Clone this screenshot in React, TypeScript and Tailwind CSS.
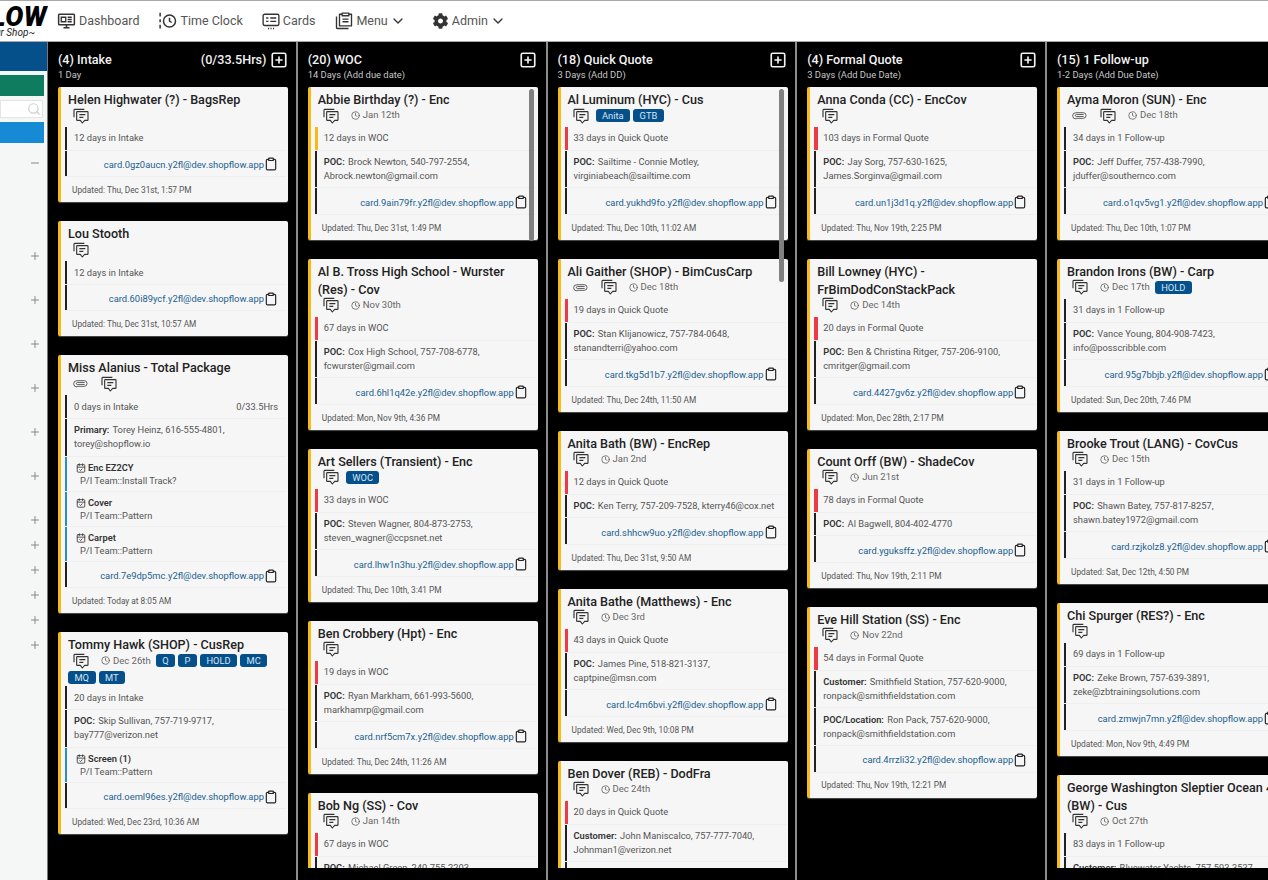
import React from 'react';
import { CalendarCheck, ChevronDown, Clipboard, Clock, Minus, Plus, Search, SquarePlus } from 'lucide-react';
import { FaCog } from 'react-icons/fa';

type Row =
  | { type: 'info'; label: string; text: string }
  | { type: 'task'; name: string; team: string };

type CardData = {
  title: string;
  clip?: boolean;
  date?: string;
  badges?: string[];
  days: string;
  hours?: string;
  bar?: 'red' | 'yellow';
  rows?: Row[];
  mail: string;
  updated: string;
};

type ColumnData = {
  title: string;
  hours?: string;
  sub: string;
  thumb?: string;
  cards: CardData[];
};

const poc = (text: string): Row => ({ type: 'info', label: 'POC:', text });
const customer = (text: string): Row => ({ type: 'info', label: 'Customer:', text });

const columns: ColumnData[] = [
  {
    title: '(4) Intake',
    hours: '(0/33.5Hrs)',
    sub: '1 Day',
    cards: [
      { title: 'Helen Highwater (?) - BagsRep', days: '12 days in Intake', mail: 'card.0gz0aucn', updated: 'Thu, Dec 31st, 1:57 PM' },
      { title: 'Lou Stooth', days: '12 days in Intake', mail: 'card.60i89ycf', updated: 'Thu, Dec 31st, 10:57 AM' },
      {
        title: 'Miss Alanius - Total Package',
        clip: true,
        days: '0 days in Intake',
        hours: '0/33.5Hrs',
        rows: [
          { type: 'info', label: 'Primary:', text: 'Torey Heinz, 616-555-4801, torey@shopflow.io' },
          { type: 'task', name: 'Enc EZ2CY', team: 'P/I Team::Install Track?' },
          { type: 'task', name: 'Cover', team: 'P/I Team::Pattern' },
          { type: 'task', name: 'Carpet', team: 'P/I Team::Pattern' },
        ],
        mail: 'card.7e9dp5mc',
        updated: 'Today at 8:05 AM',
      },
      {
        title: 'Tommy Hawk (SHOP) - CusRep',
        date: 'Dec 26th',
        badges: ['Q', 'P', 'HOLD', 'MC', 'MQ', 'MT'],
        days: '20 days in Intake',
        rows: [poc('Skip Sullivan, 757-719-9717, bay777@verizon.net'), { type: 'task', name: 'Screen (1)', team: 'P/I Team::Pattern' }],
        mail: 'card.oeml96es',
        updated: 'Wed, Dec 23rd, 10:36 AM',
      },
    ],
  },
  {
    title: '(20) WOC',
    sub: '14 Days (Add due date)',
    thumb: 'h-[152px]',
    cards: [
      { title: 'Abbie Birthday (?) - Enc', date: 'Jan 12th', bar: 'yellow', days: '12 days in WOC', rows: [poc('Brock Newton, 540-797-2554, Abrock.newton@gmail.com')], mail: 'card.9ain79fr', updated: 'Thu, Dec 31st, 1:49 PM' },
      { title: 'Al B. Tross High School - Wurster (Res) - Cov', date: 'Nov 30th', bar: 'red', days: '67 days in WOC', rows: [poc('Cox High School, 757-708-6778, fcwurster@gmail.com')], mail: 'card.6hl1q42e', updated: 'Mon, Nov 9th, 4:36 PM' },
      { title: 'Art Sellers (Transient) - Enc', badges: ['WOC'], bar: 'red', days: '33 days in WOC', rows: [poc('Steven Wagner, 804-873-2753, steven_wagner@ccpsnet.net')], mail: 'card.lhw1n3hu', updated: 'Thu, Dec 10th, 3:41 PM' },
      { title: 'Ben Crobbery (Hpt) - Enc', bar: 'red', days: '19 days in WOC', rows: [poc('Ryan Markham, 661-993-5600, markhamrp@gmail.com')], mail: 'card.nrf5cm7x', updated: 'Thu, Dec 24th, 11:26 AM' },
      { title: 'Bob Ng (SS) - Cov', date: 'Jan 14th', bar: 'red', days: '67 days in WOC', rows: [poc('Michael Green, 240-755-2203, mgreen@gmail.com')], mail: 'card.b0bng4ss', updated: 'Thu, Dec 24th, 9:14 AM' },
    ],
  },
  {
    title: '(18) Quick Quote',
    sub: '3 Days (Add DD)',
    thumb: 'h-[193px]',
    cards: [
      { title: 'Al Luminum (HYC) - Cus', badges: ['Anita', 'GTB'], bar: 'red', days: '33 days in Quick Quote', rows: [poc('Sailtime - Connie Motley, virginiabeach@sailtime.com')], mail: 'card.yukhd9fo', updated: 'Thu, Dec 10th, 11:02 AM' },
      { title: 'Ali Gaither (SHOP) - BimCusCarp', clip: true, date: 'Dec 18th', bar: 'red', days: '19 days in Quick Quote', rows: [poc('Stan Klijanowicz, 757-784-0648, stanandterri@yahoo.com')], mail: 'card.tkg5d1b7', updated: 'Thu, Dec 24th, 11:50 AM' },
      { title: 'Anita Bath (BW) - EncRep', date: 'Jan 2nd', bar: 'red', days: '12 days in Quick Quote', rows: [poc('Ken Terry, 757-209-7528, kterry46@cox.net')], mail: 'card.shhcw9uo', updated: 'Thu, Dec 31st, 9:50 AM' },
      { title: 'Anita Bathe (Matthews) - Enc', date: 'Dec 3rd', bar: 'red', days: '43 days in Quick Quote', rows: [poc('James Pine, 518-821-3137, captpine@msn.com')], mail: 'card.lc4m6bvi', updated: 'Wed, Dec 9th, 10:08 PM' },
      { title: 'Ben Dover (REB) - DodFra', date: 'Dec 24th', bar: 'red', days: '20 days in Quick Quote', rows: [customer('John Maniscalco, 757-777-7040, Johnman1@verizon.net')], mail: 'card.b3nd0v3r', updated: 'Wed, Dec 23rd, 2:10 PM' },
    ],
  },
  {
    title: '(4) Formal Quote',
    sub: '3 Days (Add Due Date)',
    cards: [
      { title: 'Anna Conda (CC) - EncCov', bar: 'red', days: '103 days in Formal Quote', rows: [poc('Jay Sorg, 757-630-1625, James.Sorginva@gmail.com')], mail: 'card.un1j3d1q', updated: 'Thu, Nov 19th, 2:25 PM' },
      { title: 'Bill Lowney (HYC) - FrBimDodConStackPack', date: 'Dec 14th', bar: 'red', days: '20 days in Formal Quote', rows: [poc('Ben & Christina Ritger, 757-206-9100, cmritger@gmail.com')], mail: 'card.4427gv6z', updated: 'Mon, Dec 28th, 2:17 PM' },
      { title: 'Count Orff (BW) - ShadeCov', date: 'Jun 21st', bar: 'red', days: '78 days in Formal Quote', rows: [poc('Al Bagwell, 804-402-4770')], mail: 'card.yguksffz', updated: 'Thu, Nov 19th, 2:11 PM' },
      {
        title: 'Eve Hill Station (SS) - Enc',
        date: 'Nov 22nd',
        bar: 'red',
        days: '54 days in Formal Quote',
        rows: [
          customer('Smithfield Station, 757-620-9000, ronpack@smithfieldstation.com'),
          { type: 'info', label: 'POC/Location:', text: 'Ron Pack, 757-620-9000, ronpack@smithfieldstation.com' },
        ],
        mail: 'card.4rrzli32',
        updated: 'Thu, Nov 19th, 12:21 PM',
      },
    ],
  },
  {
    title: '(15) 1 Follow-up',
    sub: '1-2 Days (Add Due Date)',
    cards: [
      { title: 'Ayma Moron (SUN) - Enc', clip: true, date: 'Dec 18th', days: '34 days in 1 Follow-up', rows: [poc('Jeff Duffer, 757-438-7990, jduffer@southernco.com')], mail: 'card.o1qv5vg1', updated: 'Thu, Dec 10th, 1:07 PM' },
      { title: 'Brandon Irons (BW) - Carp', date: 'Dec 17th', badges: ['HOLD'], days: '31 days in 1 Follow-up', rows: [poc('Vance Young, 804-908-7423, info@posscribble.com')], mail: 'card.95g7bbjb', updated: 'Sun, Dec 20th, 7:46 PM' },
      { title: 'Brooke Trout (LANG) - CovCus', date: 'Dec 15th', days: '31 days in 1 Follow-up', rows: [poc('Shawn Batey, 757-817-8257, shawn.batey1972@gmail.com')], mail: 'card.rzjkolz8', updated: 'Sat, Dec 12th, 4:50 PM' },
      { title: 'Chi Spurger (RES?) - Enc', days: '69 days in 1 Follow-up', rows: [poc('Zeke Brown, 757-639-3891, zeke@zbtrainingsolutions.com')], mail: 'card.zmwjn7mn', updated: 'Mon, Nov 9th, 4:49 PM' },
      { title: 'George Washington Sleptier Ocean 4 (BW) - Cus', date: 'Oct 27th', days: '83 days in 1 Follow-up', rows: [customer('Bluewater Yachts, 757-593-3537, info@bluewater.com')], mail: 'card.g30rg3wa', updated: 'Mon, Nov 9th, 1:12 PM' },
    ],
  },
];

// sidebar tree toggles, gaps in px between them
const sidebarPlus = ['mt-[81px]', 'mt-[32px]', 'mt-[32px]', 'mt-[32px]', 'mt-[32px]', 'mt-[32px]', 'mt-[32px]', 'mt-[13px]', 'mt-[13px]', 'mt-[13px]', 'mt-[13px]', 'mt-[13px]'];

function CommentIcon() {
  return (
    <svg viewBox="0 0 24 24" className="w-4 h-4 text-[#333]" fill="none" stroke="currentColor" strokeWidth="1.7" strokeLinejoin="round">
      <path d="M1.5 14V3a1 1 0 0 1 1-1H17" />
      <path d="M5.5 6.5a1 1 0 0 1 1-1h15a1 1 0 0 1 1 1v11a1 1 0 0 1-1 1H17.5l-3.5 4-3-4H6.5a1 1 0 0 1-1-1z" />
      <path d="M9.5 10h9M9.5 14h6" />
    </svg>
  );
}

function ClipIcon() {
  return (
    <svg viewBox="0 0 24 14" className="w-[15px] h-[9px] text-[#555]" fill="none" stroke="currentColor" strokeWidth="1.5" strokeLinecap="round">
      <path d="M7 11.5h11a4.5 4.5 0 0 0 0-9H6a5 5 0 0 0 0 10" />
      <path d="M18 8.5H7a1.6 1.6 0 0 1 0-3.2h11" />
    </svg>
  );
}

function DashboardIcon() {
  return (
    <svg viewBox="0 0 24 24" className="w-[19px] h-[18px] text-[#333]" fill="none" stroke="currentColor" strokeWidth="2">
      <rect x="1.5" y="3" width="21" height="14" rx="1" />
      <path d="M8 21h8M12 17v4" />
      <path d="M5 7h6v6H5zM13.5 7H19M13.5 10H19M13.5 13H19" strokeWidth="1.8" />
    </svg>
  );
}

function TimeClockIcon() {
  return (
    <svg viewBox="0 0 24 24" className="w-[18px] h-[18px] text-[#333]" fill="none" stroke="currentColor" strokeWidth="2">
      <path d="M1.5 1v5M1.5 9.5v4M1.5 17v5" />
      <circle cx="14" cy="12" r="8" />
      <path d="M14 7.5V12l3 2" />
    </svg>
  );
}

function CardsIcon() {
  return (
    <svg viewBox="0 0 24 24" className="w-[18px] h-[18px] text-[#333]" fill="none" stroke="currentColor" strokeWidth="1.8">
      <rect x="1.5" y="3" width="21" height="15" rx="2" />
      <path d="M5.5 8h3M11 8h8M5.5 12.5h3M11 12.5h8" />
      <path d="M8 22h1.5M11.3 22h1.5M14.6 22h1.5" />
    </svg>
  );
}

function MenuIcon() {
  return (
    <svg viewBox="0 0 24 24" className="w-[18px] h-[18px] text-[#333]" fill="none" stroke="currentColor" strokeWidth="1.8" strokeLinejoin="round">
      <path d="M2 6v15a1 1 0 0 0 1 1h15" />
      <path d="M9.5 3H6v15.5h16V3h-3.5" />
      <path d="M9.5 1.5h9V5h-9z" />
      <path d="M10 9.5h8M10 13h8" />
    </svg>
  );
}

function TrelloCard({ card }: { card: CardData }) {
  const barClass = card.bar === 'red' ? 'w-[3.5px] bg-[#ee3a43]' : card.bar === 'yellow' ? 'w-[3.5px] bg-[#f6bb18]' : 'w-[2px] bg-[#222]';

  return (
    <div className="w-[230px] shrink-0 bg-[#f6f6f6] border-l-[3px] border-[#f6bb18] rounded-[2px] shadow-[0_1px_1px_rgba(255,255,255,0.3)]">
      <div className="pl-[7px] pr-1 pt-1">
        <div className="text-[12.6px] leading-[18px] font-medium text-[#222]">{card.title}</div>
        <div className="flex flex-wrap items-start content-start -mt-[2px] min-h-[20px]">
          {card.clip && (
            <span className="w-[28px] h-[17px] flex items-center pl-[5px]"><ClipIcon /></span>
          )}
          <span className="w-[28px] h-[17px] flex items-center pl-[5px]"><CommentIcon /></span>
          {card.date && (
            <span className="h-[17px] flex items-center gap-[3px] px-[5px] text-[9.5px] text-[#666]">
              <Clock className="w-[9px] h-[9px] text-[#555]" />
              {card.date}
            </span>
          )}
          {card.badges?.map(b => (
            <span key={b} className="h-[13px] mr-[3px] my-[2px] px-[6.5px] rounded-[3px] bg-[#05508a] text-[9.3px] leading-[13px] text-[#d5e5f2]">
              {b}
            </span>
          ))}
        </div>
      </div>

      <div className="pl-1 pr-[2px]">
        <div className="flex h-[23.7px] border-b border-[#efefef]">
          <div className={`shrink-0 ${barClass}`} />
          <div className={`flex-1 flex justify-between items-center pr-2 text-[9.3px] text-[#555] ${card.bar ? 'pl-[5.5px]' : 'pl-[7px]'}`}>
            <span>{card.days}</span>
            {card.hours && <span>{card.hours}</span>}
          </div>
        </div>

        {card.rows?.map((row, i) =>
          row.type === 'info' ? (
            <div key={i} className="flex border-b border-[#efefef]">
              <div className="w-[2px] shrink-0 bg-[#222]" />
              <div className="flex-1 py-[4.4px] pl-[7px] pr-1 text-[9.3px] leading-[14px] text-[#555]">
                <span className="font-semibold text-[#333] mr-px">{row.label}</span> {row.text}
              </div>
            </div>
          ) : (
            <div key={i} className="flex h-[35px] border-b border-[#efefef]">
              <div className="w-[2px] shrink-0 bg-[#2a8ccc]" />
              <div className="flex-1 pl-[9px] pt-[4.5px] text-[9.3px] leading-[13px] text-[#555]">
                <div className="flex items-center gap-[2px] font-semibold text-[#333]">
                  <CalendarCheck className="w-[10px] h-[10px]" />
                  {row.name}
                </div>
                <div className="pl-[4px]">{row.team}</div>
              </div>
            </div>
          )
        )}

        <div className="flex h-[26.5px] border-b border-[#efefef]">
          <div className="w-[2px] shrink-0 bg-[#222]" />
          <div className="flex-1 flex justify-end items-center pt-[3px] pr-[8px] text-[9.4px] text-[#1a5f90]">
            <span>{card.mail}.y2fl@dev.shopflow.app</span>
            <Clipboard className="w-[14px] h-[14px] text-[#222] -mt-px" strokeWidth={2} />
          </div>
        </div>
      </div>

      <div className="h-[25px] flex items-center pt-px pl-[11px] text-[8.3px] text-[#555]">Updated: {card.updated}</div>
    </div>
  );
}

function BoardColumn({ column }: { column: ColumnData }) {
  return (
    <div className="relative w-[249.75px] shrink-0 flex flex-col border-r-2 border-[#8c8c8c] pl-[10px]">
      <div className="h-[45px] shrink-0 w-[230px] pt-[10px] text-white">
        <div className="flex items-center justify-between h-[16px] text-[12.6px] font-medium text-[#f2f2f2]">
          <span>{column.title}</span>
          <span className="flex items-center gap-[3px]">
            {column.hours}
            <SquarePlus className="w-[18px] h-[18px] mr-[0.5px]" strokeWidth={2.2} />
          </span>
        </div>
        <div className="text-[9.4px] leading-[13px] text-[#c8c8c8]">{column.sub}</div>
      </div>
      <div className="flex-1 min-h-0 mb-[12px] overflow-hidden flex flex-col gap-[19px]">
        {column.cards.map(card => (
          <TrelloCard key={card.title} card={card} />
        ))}
      </div>
      {column.thumb && <div className={`absolute top-[47px] left-[231px] w-[5px] rounded-[3px] bg-[#808080] ${column.thumb}`} />}
    </div>
  );
}

function NavItem({ icon, label, chevron, className }: { icon: React.ReactNode; label: string; chevron?: boolean; className: string }) {
  return (
    <div className={`flex items-center gap-[3px] text-[12.5px] text-[#555] ${className}`}>
      {icon}
      <span>{label}</span>
      {chevron && <ChevronDown className="w-[16px] h-[16px] text-[#333] -ml-px" />}
    </div>
  );
}

export default function App() {
  return (
    <div className="h-[880px] w-[1268px] overflow-hidden flex flex-col bg-black font-['Roboto',sans-serif]">
      <header className="h-[42px] shrink-0 flex items-center bg-white border-t border-b border-[#a8a8a8]">
        <div className="w-[48px] h-full shrink-0 overflow-hidden flex flex-col items-end pt-[5px]">
          <span className="text-[27px] leading-[22px] font-black italic tracking-[0.5px] text-black whitespace-nowrap pr-px">FLOW</span>
          <span className="text-[10px] leading-[9px] italic text-[#222] whitespace-nowrap mr-[13px]">~Your Shop~</span>
        </div>
        <NavItem icon={<DashboardIcon />} label="Dashboard" className="ml-[9px]" />
        <NavItem icon={<TimeClockIcon />} label="Time Clock" className="ml-[20px]" />
        <NavItem icon={<CardsIcon />} label="Cards" className="ml-[19px]" />
        <NavItem icon={<MenuIcon />} label="Menu" chevron className="ml-[20px]" />
        <NavItem icon={<FaCog className="w-[17px] h-[16px] text-[#333]" />} label="Admin" chevron className="ml-[26px]" />
      </header>

      <div className="flex-1 min-h-0 flex">
        <aside className="w-[48px] shrink-0 bg-[#f5f6f6] border-r border-[#777] flex flex-col">
          <div className="h-[29px] shrink-0 bg-[#05508a]" />
          <div className="h-[21px] shrink-0 mt-[4px] mr-[3px] bg-[#0f7c60]" />
          <div className="h-[18px] shrink-0 mt-[4px] mr-[4px] bg-white border border-[#e4e4e4] flex items-center justify-end pr-[1px]">
            <Search className="w-[14px] h-[14px] text-[#cfcfcf]" />
          </div>
          <div className="h-[21px] shrink-0 mt-[4px] mr-[3px] bg-[#178ad6]" />
          <div className="flex flex-col items-end pr-[6px] mt-[14px]">
            <Minus className="w-[12px] h-[12px] text-[#888]" />
            {sidebarPlus.map((mt, i) => (
              <Plus key={i} className={`w-[12px] h-[12px] text-[#888] ${mt}`} />
            ))}
          </div>
        </aside>
        {columns.map(column => (
          <BoardColumn key={column.title} column={column} />
        ))}
      </div>
    </div>
  );
}
